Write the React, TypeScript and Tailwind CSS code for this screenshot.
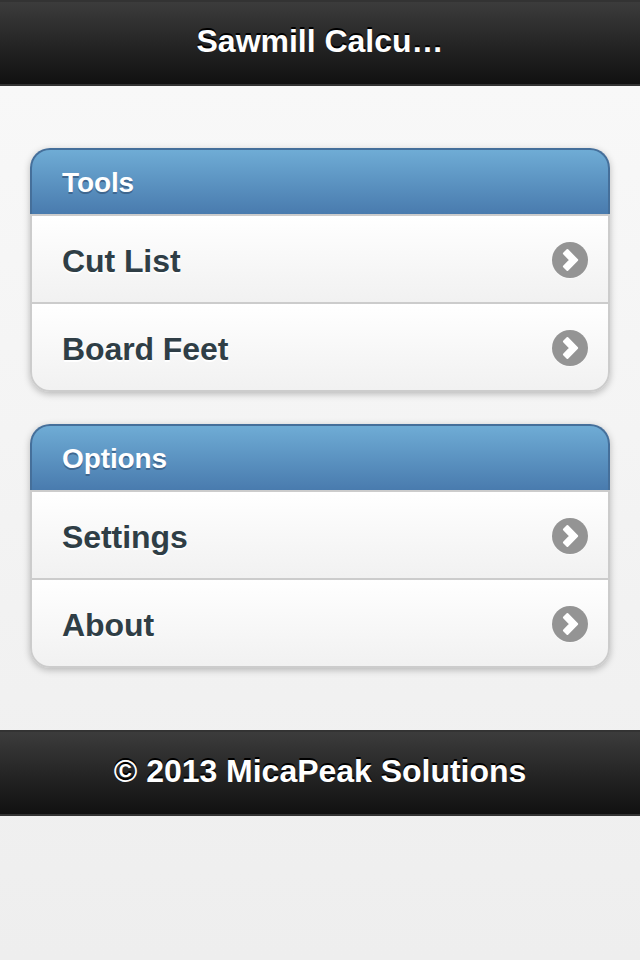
function Bar({ children }: { children: string }) {
  return (
    <div className="flex h-[86px] items-center justify-center border-y-2 border-[#333] bg-linear-to-b from-[#3c3c3c] to-[#111] bg-clip-padding pb-[5px] text-[32px] leading-10 font-bold tracking-[-0.02px] text-white [text-shadow:0_-2px_0_#000]">
      {children}
    </div>
  );
}

function Chevron() {
  return (
    <svg width="36" height="36" viewBox="0 0 36 36" className="mt-0.5 shrink-0 overflow-visible">
      <circle cx="18" cy="19" r="18" fill="#fff" fillOpacity=".4" />
      <circle cx="18" cy="18" r="18" fill="#949494" />
      <path d="M11.9 11.5 15.4 8 25.2 18 15.4 28 11.9 24.5 18.2 18Z" fill="#fff" stroke="#fff" strokeWidth="2" strokeLinejoin="round" />
    </svg>
  );
}

function List({ title, items }: { title: string; items: string[] }) {
  return (
    <section className="rounded-[20px] shadow-[0_2px_7px_rgba(0,0,0,0.25)]">
      <h2 className="flex h-[66px] items-center rounded-t-[20px] border-x-2 border-t-2 border-[#456f9a] bg-linear-to-b from-[#6facd5] to-[#497bae] px-[30px] pt-0.5 text-[28px] leading-9 font-bold tracking-[-0.1px] text-white [text-shadow:0_2px_0_#3e6790]">
        {title}
      </h2>
      <ul>
        {items.map((item) => (
          <li
            key={item}
            className="flex h-[88px] items-center justify-between border-x-2 border-t-2 border-[#ccc] bg-linear-to-b from-white to-[#f1f1f1] pr-5 pl-[30px] last:h-[90px] last:rounded-b-[20px] last:border-b-2"
          >
            <span className="pt-1 text-[32px] leading-10 font-bold tracking-[-0.08px] text-[#2f3e46] [text-shadow:0_2px_0_#fff]">{item}</span>
            <Chevron />
          </li>
        ))}
      </ul>
    </section>
  );
}

export default function App() {
  return (
    <div className="min-h-[960px] bg-linear-to-b from-[#f9f9f9] to-[#eee] font-['Liberation_Sans',Arial,sans-serif]">
      <header>
        <Bar>Sawmill Calcu…</Bar>
      </header>
      <main className="flex flex-col gap-8 px-[30px] py-[62px]">
        <List title="Tools" items={["Cut List", "Board Feet"]} />
        <List title="Options" items={["Settings", "About"]} />
      </main>
      <footer>
        <Bar>© 2013 MicaPeak Solutions</Bar>
      </footer>
    </div>
  );
}
